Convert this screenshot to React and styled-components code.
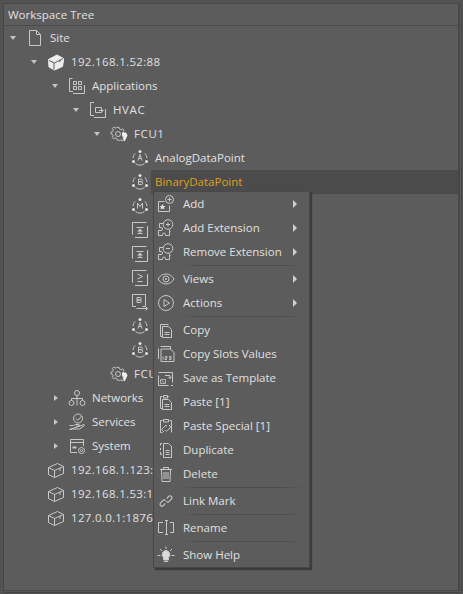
import React from 'react'
import styled, { createGlobalStyle } from 'styled-components'

const GlobalStyle = createGlobalStyle`
  html, body {
    margin: 0;
    padding: 0;
    background: #525252;
  }
`

const Page = styled.div`
  position: relative;
  box-sizing: border-box;
  width: 463px;
  height: 594px;
  padding: 3px;
  overflow: hidden;
  font-family: 'Open Sans', 'Noto Sans', sans-serif;
  font-size: 11.5px;
  color: #e0e0e0;
`

const Panel = styled.div`
  box-sizing: border-box;
  height: 100%;
  display: flex;
  flex-direction: column;
  background: #5c5c5c;
  border: 1px solid #474747;
  border-right-width: 2px;
  box-shadow: 1px 1px 0 #585858, 2px 2px 0 #454545;
`

const Header = styled.div`
  height: 21px;
  flex: none;
  display: flex;
  align-items: center;
  padding-left: 4px;
  border-bottom: 1px solid #4a4a4a;
`

const Tree = styled.div`
  display: flex;
  flex-direction: column;
`

const Row = styled.div`
  height: 24px;
  display: flex;
  align-items: center;
  padding-left: ${(p) => 4 + p.$depth * 21}px;
`

const ArrowCell = styled.div`
  width: 16px;
  flex: none;
  display: flex;
  align-items: center;
`

const ArrowDown = styled.span`
  margin-left: 2px;
  width: 0;
  height: 0;
  border-left: 3.5px solid transparent;
  border-right: 3.5px solid transparent;
  border-top: 4px solid #c4c4c4;
`

const ArrowRight = styled.span`
  margin-left: 4px;
  width: 0;
  height: 0;
  border-top: 3.5px solid transparent;
  border-bottom: 3.5px solid transparent;
  border-left: 4px solid #c4c4c4;
`

const IconCell = styled.div`
  width: 22px;
  flex: none;
  display: flex;
  align-items: center;
  justify-content: center;
`

const Label = styled.div`
  flex: 1;
  box-sizing: border-box;
  height: 24px;
  display: flex;
  align-items: center;
  padding: 0 0 2px 4px;
  white-space: nowrap;
  letter-spacing: ${(p) => p.$spacing || 0}px;
  background: ${(p) => (p.$selected ? '#4b4b4b' : 'transparent')};
  color: ${(p) => (p.$selected ? '#dca21f' : '#e0e0e0')};
`

const Menu = styled.div`
  position: absolute;
  left: 153px;
  top: 191px;
  width: 155px;
  border: 1px solid #484848;
  background: #5c5c5c;
  box-shadow: 2px 2px 1px rgba(0, 0, 0, 0.35);
`

const MenuItem = styled.div`
  height: 24px;
  display: flex;
  align-items: center;
`

const MenuIcon = styled.div`
  width: 26px;
  margin-left: -1px;
  flex: none;
  display: flex;
  align-items: center;
  justify-content: center;
`

const MenuText = styled.span`
  margin: 0 0 2px 4px;
  flex: 1;
  white-space: nowrap;
`

const SubArrow = styled.span`
  margin-right: 12px;
  width: 0;
  height: 0;
  border-top: 4px solid transparent;
  border-bottom: 4px solid transparent;
  border-left: 4px solid #d0d0d0;
`

const Separator = styled.div`
  height: 1px;
  margin: 1px 4px 1px 29px;
  background: linear-gradient(to right, #5c5c5c, #4b4b4b 15%, #4b4b4b 80%, #5c5c5c);
`

const Svg = ({ children }) => (
  <svg width="18" height="18" viewBox="0 0 18 18" fill="none" stroke="#c8c8c8" strokeWidth="1">
    {children}
  </svg>
)

const SiteIcon = () => (
  <Svg>
    <path d="M3.5 1.500h7l4 4v11h-11zM10.500 1.500v4h4" />
  </Svg>
)

const StationSolid = () => (
  <Svg>
    <path d="M1.500 6.500l8.500-4.500 6.500 3.500v2l-1 6-8 3.500-5.500-3z" fill="#eeeeee" stroke="#eeeeee" />
    <path d="M2 7.500l5.500 2.500 8.500-4.500M7 10v6.500M12 8.500l2-1" stroke="#5c5c5c" />
  </Svg>
)

const StationOutline = () => (
  <Svg>
    <path d="M1.500 6.500l9-4 6 3v7l-9 4-6-3zM1.500 6.500l6 3 9-4M7.500 9.500v7M13 7v3" />
  </Svg>
)

const Apps = () => (
  <Svg>
    <path d="M5 14.500H1.500V1.500h3M16.500 8v8.500H5" />
    <path d="M5.500 4.500h3v3h-3zM10.500 4.500h3v3h-3zM5.500 9.500h3v3h-3zM10.500 9.500h3v3h-3z" />
  </Svg>
)

const Folder = () => (
  <Svg>
    <path d="M5 14.500H1.500V1.500H5M16.500 8v8.500H5" />
    <path d="M6.500 6.500h6v2M6.500 6.500v5h6v-1M10 9.500h4M12.500 8l1.500 1.500-1.500 1.500" />
  </Svg>
)

const Gear = () => (
  <Svg>
    <circle cx="8" cy="9" r="2.500" />
    <path d="M7 3h2l.5 1.800 1.700.7 1.600-1 1.400 1.400-1 1.600.7 1.700 1.600.8v2l-1.800.5-.7 1.700 1 1.600-1.400 1.400-1.600-1-1.700.7L9 16.500H7l-.5-1.800-1.700-.7-1.600 1-1.400-1.400 1-1.600-.7-1.700L.5 10V8l1.800-.5.7-1.700-1-1.600 1.400-1.400 1.600 1 1.700-.7z" transform="translate(0.500 -0.500) scale(0.95)" />
    <path d="M12 7.500h4l1.500 3-3 6-1-1v-4h-1.500z" fill="#f0f0f0" stroke="none" />
  </Svg>
)

const Point = ({ letter }) => (
  <Svg>
    <path d="M4 4.500a7 7 0 0 0-2 4.500M14 4.500a7 7 0 0 1 2 4.500M4.500 14.500a7 7 0 0 0 9 0" />
    <circle cx="9" cy="2.500" r="1.500" fill="#e6e6e6" stroke="none" />
    <circle cx="2.500" cy="12.500" r="1.500" fill="#e6e6e6" stroke="none" />
    <circle cx="15.500" cy="12.500" r="1.500" fill="#e6e6e6" stroke="none" />
    <path d={letter} />
  </Svg>
)

const LETTER_A = 'M7 11.500l2-6 2 6M7.800 9.500h2.400'
const LETTER_B = 'M7.500 6h2.500a1.300 1.300 0 0 1 0 2.700H7.500zM7.500 8.700h2.800a1.400 1.400 0 0 1 0 2.800H7.500z'
const LETTER_M = 'M6.500 11.500v-5.500l2.500 3.500 2.500-3.500v5.500'

const BoxUp = () => (
  <Svg>
    <path d="M1.500 13.500V1.500h14M16.500 5v11.500H4" />
    <path d="M5.500 6.500h7" />
    <path d="M9 7.500l3 3H6z" fill="#c8c8c8" stroke="none" />
    <path d="M9 10v2.500M6.500 12.500h5" />
  </Svg>
)

const BoxGe = () => (
  <Svg>
    <path d="M1.500 13.500V1.500h14M16.500 5v11.500H4" />
    <path d="M6.500 5l5 2.500-5 2.500M6.500 12.500h5" />
  </Svg>
)

const BoxB = () => (
  <Svg>
    <path d="M5 13.500H1.500V1.500h13v12h-3" />
    <path d="M6 4.500h3a1.200 1.200 0 0 1 0 2.500H6zM6 7h3.200a1.200 1.200 0 0 1 0 2.500H6zM5.500 15.500h11M14.500 13.500l2 2-2 2" />
  </Svg>
)

const Network = () => (
  <Svg>
    <circle cx="9" cy="4" r="2.500" />
    <circle cx="3.500" cy="14" r="2.500" />
    <circle cx="14.500" cy="14" r="2.500" />
    <path d="M9 6.500v3M3.500 11.500v-2h11v2M9 9.500v7" />
  </Svg>
)

const ServiceHand = () => (
  <Svg>
    <circle cx="10" cy="5.500" r="4.500" />
    <path d="M8 5.500l1.800 1.800 4-4.300M1.500 12.500h4l2-1h3.500l1 1.500h-4M12 13l4-1.500.5 1-5 3.500H4.500l-3 .5z" />
  </Svg>
)

const SystemIcon = () => (
  <Svg>
    <path d="M9 15.500H2.500v-13h13V9M2.500 5.500h13" />
    <path d="M4.500 10.500h4" strokeWidth="2" />
    <circle cx="13.500" cy="13.500" r="3" />
    <circle cx="13.500" cy="13.500" r="1" />
  </Svg>
)

const AddStar = () => (
  <Svg>
    <path d="M1.500 6.500h6M1.500 6.500v10h11v-6" />
    <path d="M5.500 9l1 2h2l-1.500 1.500.5 2-2-1-2 1 .5-2L2.500 11h2z" fill="#e0e0e0" stroke="none" />
    <circle cx="12.500" cy="4.500" r="4" />
    <path d="M10.500 4.500h4M12.500 2.500v4" />
  </Svg>
)

const Puzzle = ({ plus }) => (
  <Svg>
    <circle cx="11" cy="5.500" r="4.800" />
    <path d="M9 5.500h4" />
    {plus && <path d="M11 3.500v4" />}
    <path d="M6.500 4.500h-4v4h1.500a1.500 1.500 0 0 1 0 3H1.500v5h4v-1a1.500 1.500 0 0 1 3 0v1h4v-4h1M12.500 10.500v2" />
  </Svg>
)

const Eye = () => (
  <Svg>
    <path d="M1 9c2-3.500 5-5 8-5s6 1.500 8 5c-2 3.500-5 5-8 5s-6-1.500-8-5z" />
    <circle cx="9" cy="9" r="3" />
    <circle cx="9" cy="9" r="1" fill="#c8c8c8" stroke="none" />
  </Svg>
)

const Play = () => (
  <Svg>
    <circle cx="9" cy="9" r="7.500" />
    <path d="M7 5.500l5.500 3.500L7 12.500z" />
  </Svg>
)

const CopyIcon = () => (
  <Svg>
    <path d="M5.500 15.500h-2v-12h8" />
    <path d="M5.500 5.500h6l3 3v8h-9zM7.500 11.500h5M7.500 13.500h5" />
  </Svg>
)

const CopySlots = () => (
  <Svg>
    <path d="M3.500 1.500h10V5M1.500 3.500V14" />
    <path d="M4 4h9.500L17 7.500v9H4z" fill="#5c5c5c" />
    <path d="M6 14.500v-3M8 11.500h2v1.500H8v1.500h2M12 11.500h2v3h-2M12 13h2" strokeWidth="0.900" />
  </Svg>
)

const Template = () => (
  <Svg>
    <path d="M1.500 6.500v10h10M1.500 3.500h14v10M14 16.500h2" />
    <path d="M8 6.500h5v3M11.500 8l1.500 1.500L14.500 8" />
    <path d="M3.500 10.500h5v4h-5zM4.500 11.500l3 2" strokeWidth="0.800" />
  </Svg>
)

const PasteIcon = () => (
  <Svg>
    <path d="M5.500 3.500h-2v12h2M12.500 3.500h-1" />
    <path d="M6.500 2.500h4v2.500h-4zM5.500 6.500h6l3 3v7h-9zM7.500 11.500h5M7.500 13.500h5" />
  </Svg>
)

const PasteSpecial = () => (
  <Svg>
    <path d="M5.500 3.500h-2v12h2M12.500 3.500h2v12" />
    <path d="M6.500 2.500h5v2.500h-5z" />
    <path d="M7 15l-1.500-1.500a1.400 1.400 0 0 1 0-2l2.500-2.500a1.400 1.400 0 0 1 2 0M12 8l1 1a1.400 1.400 0 0 1 0 2l-2.500 2.500a1.400 1.400 0 0 1-2 0l-.5-.5" />
  </Svg>
)

const DuplicateIcon = () => (
  <Svg>
    <path d="M5 2.500H3.500v2M3.500 7v2M3.500 11v2.500H5" />
    <path d="M6.500 2.500h5l3 3v11h-8zM8.500 9.500h4M8.500 11.500h4M8.500 13.500h4" />
  </Svg>
)

const Trash = () => (
  <Svg>
    <path d="M3 4.500h12M6.500 4.500V2.500h5v2M4.500 4.500l.5 12h8l.5-12M7 7v7M9 7v7M11 7v7" />
  </Svg>
)

const Chain = () => (
  <Svg>
    <g transform="translate(1.800 1.800) scale(0.8)" strokeWidth="1.400">
      <path d="M8 12l-2.500 3a2.500 2.500 0 0 1-3.500-3.500L5 8.500a2.500 2.500 0 0 1 3.500 0M10 6l2.500-3a2.500 2.500 0 0 1 3.500 3.500L13 9.500a2.500 2.500 0 0 1-3.500 0" />
    </g>
  </Svg>
)

const RenameIcon = () => (
  <Svg>
    <path d="M6 3.500H1.500v10H6M13 3.500h3.500v10H13M8 1.500h3M8 15.500h3M9.500 1.500v14" />
  </Svg>
)

const Bulb = () => (
  <Svg>
    <path d="M9 4.500a4 4 0 0 1 2.500 7v2.500h-5v-2.500A4 4 0 0 1 9 4.500z" fill="#dcdcdc" />
    <path d="M7 15.500h4M9 .5v2.500M3 3l2 2M15 3l-2 2M.5 9.500h3M14.500 9.500h3" />
  </Svg>
)

const tree = [
  { depth: 0, arrow: 'down', icon: <SiteIcon />, label: 'Site' },
  { depth: 1, arrow: 'down', icon: <StationSolid />, label: '192.168.1.52:88', spacing: 0.33 },
  { depth: 2, arrow: 'down', icon: <Apps />, label: 'Applications' },
  { depth: 3, arrow: 'down', icon: <Folder />, label: 'HVAC', spacing: 0.6 },
  { depth: 4, arrow: 'down', icon: <Gear />, label: 'FCU1', spacing: 0.6 },
  { depth: 5, icon: <Point letter={LETTER_A} />, label: 'AnalogDataPoint' },
  { depth: 5, icon: <Point letter={LETTER_B} />, label: 'BinaryDataPoint', selected: true },
  { depth: 5, icon: <Point letter={LETTER_M} /> },
  { depth: 5, icon: <BoxUp /> },
  { depth: 5, icon: <BoxUp /> },
  { depth: 5, icon: <BoxGe /> },
  { depth: 5, icon: <BoxB /> },
  { depth: 5, icon: <Point letter={LETTER_A} /> },
  { depth: 5, icon: <Point letter={LETTER_B} /> },
  { depth: 4, icon: <Gear />, label: 'FCU2', spacing: 0.6 },
  { depth: 2, arrow: 'right', icon: <Network />, label: 'Networks' },
  { depth: 2, arrow: 'right', icon: <ServiceHand />, label: 'Services' },
  { depth: 2, arrow: 'right', icon: <SystemIcon />, label: 'System' },
  { depth: 1, icon: <StationOutline />, label: '192.168.1.123:88', spacing: 0.33 },
  { depth: 1, icon: <StationOutline />, label: '192.168.1.53:1876', spacing: 0.33 },
  { depth: 1, icon: <StationOutline />, label: '127.0.0.1:1876', spacing: 0.3 },
]

const menu = [
  { icon: <AddStar />, label: 'Add', sub: true },
  { icon: <Puzzle plus />, label: 'Add Extension', sub: true },
  { icon: <Puzzle />, label: 'Remove Extension', sub: true },
  { sep: true },
  { icon: <Eye />, label: 'Views', sub: true },
  { icon: <Play />, label: 'Actions', sub: true },
  { sep: true },
  { icon: <CopyIcon />, label: 'Copy' },
  { icon: <CopySlots />, label: 'Copy Slots Values' },
  { icon: <Template />, label: 'Save as Template' },
  { icon: <PasteIcon />, label: 'Paste [1]' },
  { icon: <PasteSpecial />, label: 'Paste Special [1]' },
  { icon: <DuplicateIcon />, label: 'Duplicate' },
  { icon: <Trash />, label: 'Delete' },
  { sep: true },
  { icon: <Chain />, label: 'Link Mark' },
  { sep: true },
  { icon: <RenameIcon />, label: 'Rename' },
  { sep: true },
  { icon: <Bulb />, label: 'Show Help' },
]

const App = () => (
  <Page>
    <GlobalStyle />
    <Panel>
      <Header>Workspace Tree</Header>
      <Tree>
        {tree.map((node, i) => (
          <Row key={i} $depth={node.depth}>
            <ArrowCell>
              {node.arrow === 'down' && <ArrowDown />}
              {node.arrow === 'right' && <ArrowRight />}
            </ArrowCell>
            <IconCell>{node.icon}</IconCell>
            <Label $selected={node.selected} $spacing={node.spacing}>
              {node.label}
            </Label>
          </Row>
        ))}
      </Tree>
    </Panel>
    <Menu>
      {menu.map((item, i) =>
        item.sep ? (
          <Separator key={i} />
        ) : (
          <MenuItem key={i}>
            <MenuIcon>{item.icon}</MenuIcon>
            <MenuText>{item.label}</MenuText>
            {item.sub && <SubArrow />}
          </MenuItem>
        )
      )}
    </Menu>
  </Page>
)

export default App
